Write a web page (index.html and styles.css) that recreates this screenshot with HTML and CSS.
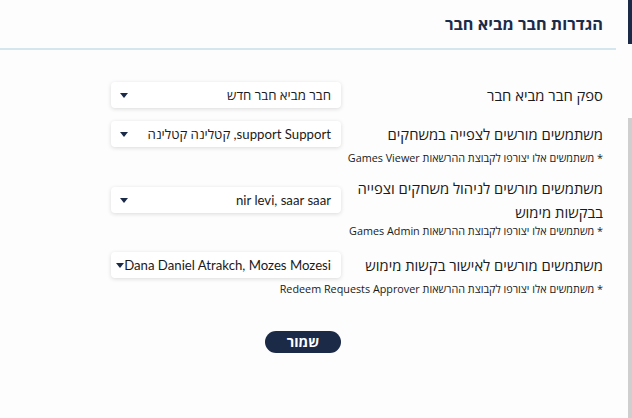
FILE: index.html
```html
<!DOCTYPE html>
<html lang="he" dir="rtl">
<head>
<meta charset="utf-8">
<link rel="stylesheet" href="styles.css">
</head>
<body>
<div class="page">
  <div class="strip">
    <div class="strip-top"></div>
    <div class="strip-gap"></div>
    <div class="strip-scroll"></div>
  </div>
  <main class="main">
    <header class="header">
      <h1 class="title">הגדרות חבר מביא חבר</h1>
    </header>
    <form class="form">
      <div class="field field-1">
        <div class="row">
          <label class="label">ספק חבר מביא חבר</label>
          <div class="select"><span class="value">חבר מביא חבר חדש</span><span class="caret"></span></div>
        </div>
      </div>
      <div class="field field-2">
        <div class="row">
          <label class="label">משתמשים מורשים לצפייה במשחקים</label>
          <div class="select"><span class="value">support Support, קטלינה קטלינה</span><span class="caret"></span></div>
        </div>
        <div class="hint">* משתמשים אלו יצורפו לקבוצת ההרשאות Games Viewer</div>
      </div>
      <div class="field field-3">
        <div class="row">
          <label class="label">משתמשים מורשים לניהול משחקים וצפייה בבקשות מימוש</label>
          <div class="select"><span class="value">nir levi, saar saar</span><span class="caret"></span></div>
        </div>
        <div class="hint hint-close">* משתמשים אלו יצורפו לקבוצת ההרשאות Games Admin</div>
      </div>
      <div class="field field-4">
        <div class="row">
          <label class="label">משתמשים מורשים לאישור בקשות מימוש</label>
          <div class="select"><span class="value">Dana Daniel Atrakch, Mozes Mozesi</span><span class="caret"></span></div>
        </div>
        <div class="hint">* משתמשים אלו יצורפו לקבוצת ההרשאות Redeem Requests Approver</div>
      </div>
      <div class="actions">
        <button type="button" class="save">שמור</button>
      </div>
    </form>
  </main>
</div>
</body>
</html>
```
FILE: styles.css
```css
* { box-sizing: border-box; }
html, body {
  margin: 0;
  padding: 0;
  background: #fdfdfd;
  font-family: Lato, "Open Sans", "Noto Sans", sans-serif;
  color: #1a1a1a;
}
.page {
  display: flex;
  flex-direction: row;
  width: 632px;
  height: 418px;
  overflow: hidden;
}
.strip {
  width: 4px;
  display: flex;
  flex-direction: column;
  flex: none;
}
.strip-top { height: 44px; background: #1b2a47; }
.strip-gap { height: 74px; background: #fdfdfd; }
.strip-scroll { flex: 1; background: #cfcfcf; }
.main {
  flex: 1;
  display: flex;
  flex-direction: column;
}
.header {
  margin-right: 12px;
  height: 50px;
  border-bottom: 2px solid #d5e6ee;
  padding-right: 13px;
  display: flex;
  align-items: center;
}
.title {
  margin: 0;
  font-size: 16.3px;
  font-weight: 700;
  color: #1c2b48;
  font-family: "Open Sans", "Noto Sans", sans-serif;
}
.form {
  width: 492px;
  margin-right: 25px;
  padding-top: 32px;
  display: flex;
  flex-direction: column;
}
.row {
  display: flex;
  align-items: center;
  justify-content: space-between;
}
.label {
  width: 250px;
  font-size: 14.8px;
  line-height: 24px;
  font-family: "Open Sans", "Noto Sans", sans-serif;
  color: #1a1a1a;
}
.select {
  width: 230px;
  height: 26px;
  background: #fff;
  border-radius: 4px;
  box-shadow: 0 1px 4px rgba(0,0,0,0.14);
  display: flex;
  align-items: center;
  justify-content: space-between;
  padding: 0 10px 0 9px;
  font-size: 13.2px;
  white-space: nowrap;
  color: #1a1a1a;
}
.caret {
  width: 0;
  height: 0;
  border-left: 4px solid transparent;
  border-right: 4px solid transparent;
  border-top: 5px solid #1b2a47;
}
.hint {
  font-size: 10.8px;
  line-height: 14px;
  margin-top: 4px;
  font-family: "Open Sans", "Noto Sans", sans-serif;
}
.hint-close { margin-top: 0; }
.field-2 { margin-top: 13px; }
.field-3 { margin-top: 11px; }
.field-4 { margin-top: 14px; }
.actions {
  margin-top: 35px;
  display: flex;
  justify-content: flex-start;
  padding-right: 262px;
}
.save {
  width: 76px;
  height: 22px;
  border: none;
  border-radius: 11px;
  background: #1b2a47;
  color: #fff;
  font-weight: 700;
  font-size: 14px;
  font-family: "Open Sans", "Noto Sans", sans-serif;
  padding: 0;
  line-height: 22px;
}
```
